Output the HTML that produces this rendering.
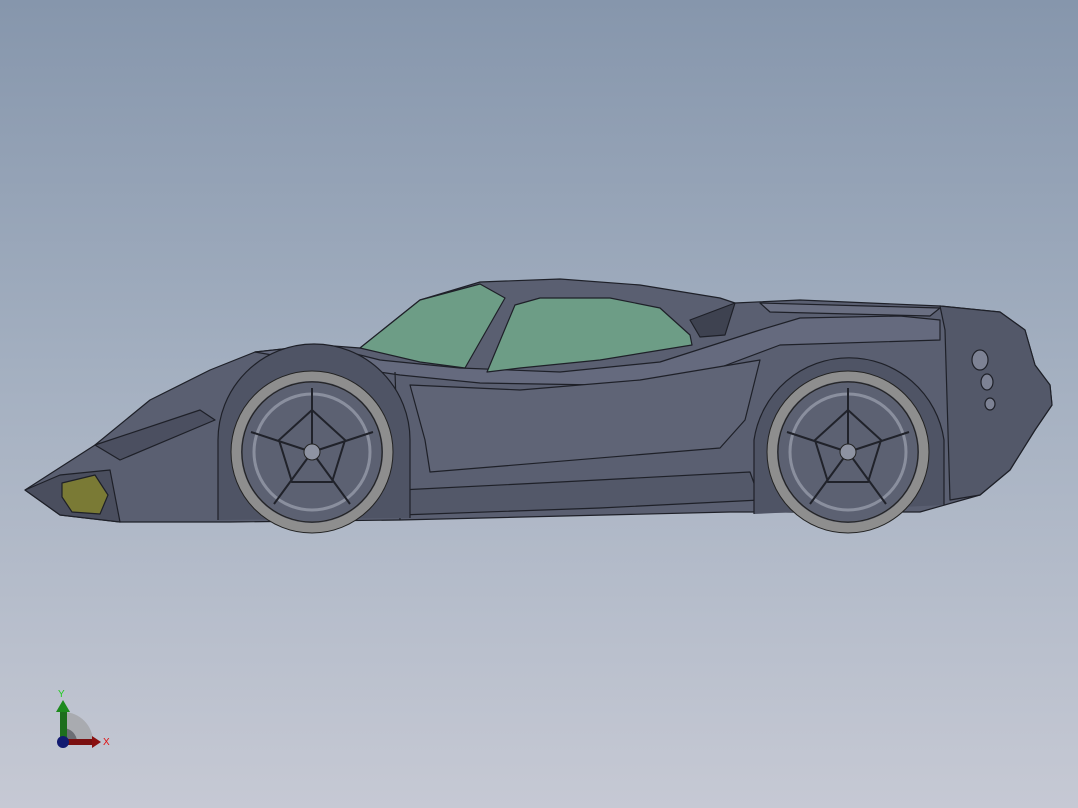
<!DOCTYPE html>
<html><head><style>
html,body{margin:0;padding:0;width:1078px;height:808px;overflow:hidden;}
body{background:linear-gradient(#8696ac 0%,#a3afc0 45%,#c6c9d4 100%);}
svg{position:absolute;left:0;top:0}
</style></head><body>
<svg width="1078" height="808" viewBox="0 0 1078 808" xmlns="http://www.w3.org/2000/svg">
<g stroke="#1e2028" stroke-width="1.2" stroke-linejoin="round">
<path d="M25,490 L95,445 L150,400 L210,370 L255,352 L320,345 L360,348 L420,300 L480,282 L560,279 L640,285 L720,298 L735,303 L800,300 L940,306 L1000,312 L1025,330 L1035,365 L1050,385 L1052,405 L1035,430 L1010,470 L980,495 L920,512 L810,512 L730,512 L400,520 L230,522 L120,522 L60,515 Z" fill="#5a5f71"/>
<path d="M25,490 L60,475 L110,470 L120,522 L60,515 Z" fill="#4a4e5e"/>
<path d="M62,483 L95,475 L108,495 L100,514 L72,512 L62,497 Z" fill="#7a7a35"/>
<path d="M255,352 L320,345 L380,360 L460,368 L560,372 L660,362 L760,330 L800,318 L900,316 L940,320 L940,340 L780,345 L700,375 L600,385 L480,383 L400,375 L330,365 Z" fill="#656a7e"/>
<path d="M410,385 L520,390 L640,380 L760,360 L745,420 L720,448 L430,472 L425,440 Z" fill="#5f6476"/>
<path d="M400,490 L560,482 L750,472 L760,500 L600,508 L400,515 Z" fill="#535869"/>
<path d="M940,306 L1000,312 L1025,330 L1035,365 L1050,385 L1052,405 L1035,430 L1010,470 L980,495 L950,500 L945,330 Z" fill="#535869"/>
<path d="M360,348 L420,300 L480,284 L505,298 L465,368 L420,362 Z" fill="#6d9d86"/>
<path d="M487,372 L515,305 L540,298 L610,298 L660,308 L690,335 L692,345 L600,360 L520,368 Z" fill="#6d9d86"/>
<path d="M690,320 L735,303 L725,335 L700,337 Z" fill="#3e4250"/>
<g fill="#7d8294">
<ellipse cx="980" cy="360" rx="8" ry="10"/><ellipse cx="987" cy="382" rx="6" ry="8"/><ellipse cx="990" cy="404" rx="5" ry="6"/>
</g>
<path d="M760,303 L940,308 L930,316 L770,312 Z" fill="#6a6f82"/>
<path d="M95,445 L200,410 L215,420 L120,460 Z" fill="#4b4f60"/>
<path d="M395,372 L400,520" fill="none"/>
<!-- wheel arches -->
<path d="M218,520 L218,440 A96,96 0 0 1 410,440 L410,518" fill="#4f5465"/>
<path d="M754,514 L754,440 A96,96 0 0 1 944,440 L944,505" fill="#4f5465"/>
</g>
<g id="w">
<circle cx="312" cy="452" r="80" fill="#3a3d49"/>
<circle cx="312" cy="452" r="76" fill="none" stroke="#8e8e8e" stroke-width="10"/>
<circle cx="312" cy="452" r="81" fill="none" stroke="#222" stroke-width="1"/>
<circle cx="312" cy="452" r="70" fill="#5c6172" stroke="#222"/>
<circle cx="312" cy="452" r="58" fill="none" stroke="#8a8f9e" stroke-width="3"/>
<g stroke="#20222a" stroke-width="2" fill="none">
<path d="M312,452 L312,388 M312,452 L373,432 M312,452 L350,504 M312,452 L274,504 M312,452 L251,432"/>
<path d="M312,410 L345,440 L332,482 L292,482 L279,440 Z"/>
</g>
<circle cx="312" cy="452" r="8" fill="#8e93a2" stroke="#222"/>
</g>
<use href="#w" transform="translate(536,0)"/>
<path d="M63,742 L63,712 A30,30 0 0 1 93,742 Z" fill="#a9abb0"/>
<path d="M63,742 L63,728 A14,14 0 0 1 77,742 Z" fill="#6c6e74"/>
<rect x="60" y="710" width="7" height="32" fill="#1d6e1d"/>
<path d="M56,712 L63,700 L70,712 Z" fill="#1d8a1d"/>
<rect x="63" y="739" width="30" height="6" fill="#7a1010"/>
<path d="M92,736 L101,742 L92,748 Z" fill="#8a1010"/>
<circle cx="63" cy="742" r="6" fill="#121a70"/>
<text x="58" y="697" font-family="Liberation Sans,sans-serif" font-size="10" fill="#22cc22">Y</text>
<text x="103" y="745" font-family="Liberation Sans,sans-serif" font-size="10" fill="#e01010">X</text>
</svg>
</body></html>
